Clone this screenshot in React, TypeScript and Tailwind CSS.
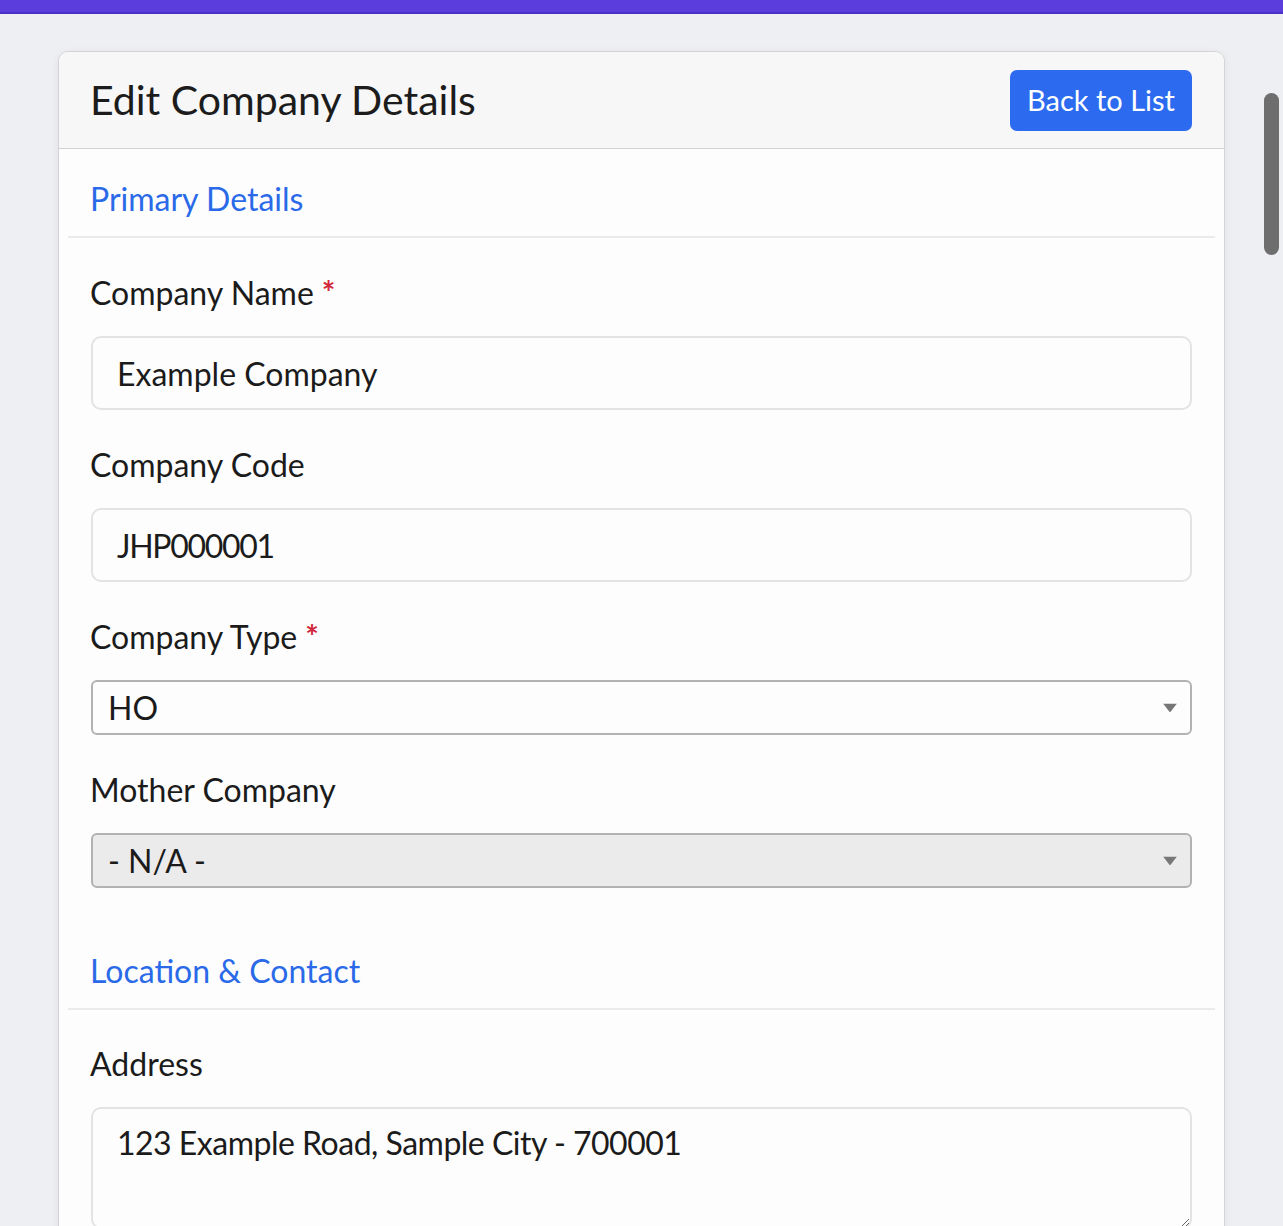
function Caret() {
  return (
    <svg className="pointer-events-none absolute right-[15px] top-1/2 -translate-y-1/2" width="14" height="9" viewBox="0 0 14 9">
      <polygon points="0,0 14,0 7,9" fill="#777777" />
    </svg>
  );
}

function Label({ text, required }: { text: string; required?: boolean }) {
  return (
    <label className="mb-[23px] block text-[32px] leading-[40px] text-[#1b1b1b]">
      {text}
      {required && <span className="ml-[8px] font-bold text-[#d2263b]">*</span>}
    </label>
  );
}

export default function App() {
  return (
    <div className="relative h-[1226px] overflow-hidden bg-[#eeeff3] font-['Lato',sans-serif] text-[#1b1b1b]">
      <div className="h-[14px] border-b-2 border-[#4a30c4] bg-[#5a3ddc]" />
      <div className="px-[58px] pt-[37px]">
        <div className="rounded-[10px] border border-[#d4d4d4] bg-[#fdfdfd] shadow-[0_2px_10px_rgba(0,0,0,0.06)]">
          <div className="flex h-[97px] items-center justify-between rounded-t-[10px] border-b border-[#d2d2d2] bg-[#f7f7f7] pl-[31px] pr-8">
            <h1 className="text-[41px] leading-[48px] text-[#1c1c1c]">Edit Company Details</h1>
            <button className="h-[61px] w-[182px] rounded-[7px] bg-[#2c6bef] text-[29px] leading-[36px] text-white">
              Back to List
            </button>
          </div>
          <div className="px-[9px] pb-10">
            <div className="border-b-2 border-[#ebebeb] pb-[17px] pl-[22px] pr-[23px] pt-[30px] text-[32px] leading-[40px] text-[#2a6ae9]">
              Primary Details
            </div>
            <div className="flex flex-col gap-[35px] pl-[22px] pr-[23px] pt-[35px]">
              <div>
                <Label text="Company Name" required />
                <input
                  readOnly
                  value="Example Company"
                  className="ml-px h-[74px] w-[calc(100%-1px)] rounded-[10px] border-2 border-[#e3e3e3] bg-[#fdfdfd] px-[24px] text-[32px] text-[#1b1b1b] outline-none"
                />
              </div>
              <div>
                <Label text="Company Code" />
                <input
                  readOnly
                  value="JHP000001"
                  className="ml-px h-[74px] w-[calc(100%-1px)] rounded-[10px] border-2 border-[#e3e3e3] bg-[#fdfdfd] px-[24px] text-[32px] tracking-[-1.3px] text-[#1b1b1b] outline-none"
                />
              </div>
              <div>
                <Label text="Company Type" required />
                <div className="relative ml-px">
                  <select
                    defaultValue="HO"
                    className="h-[55px] w-full appearance-none rounded-[6px] border-2 border-[#b2b2b2] bg-[#fdfdfd] pl-[15px] text-[32px] text-[#1b1b1b] outline-none"
                  >
                    <option value="HO">HO</option>
                    <option value="BR">Branch</option>
                  </select>
                  <Caret />
                </div>
              </div>
              <div>
                <Label text="Mother Company" />
                <div className="relative ml-px">
                  <select
                    disabled
                    defaultValue="na"
                    className="h-[55px] w-full appearance-none rounded-[6px] border-2 border-[#b2b2b2] bg-[#ebebeb] pl-[15px] text-[32px] text-[#1b1b1b] opacity-100 outline-none"
                  >
                    <option value="na">- N/A -</option>
                  </select>
                  <Caret />
                </div>
              </div>
            </div>
            <div className="mt-[63px] border-b-2 border-[#ebebeb] pb-[17px] pl-[22px] pr-[23px] text-[32px] leading-[40px] text-[#2a6ae9]">
              Location &amp; Contact
            </div>
            <div className="flex flex-col gap-[35px] pl-[22px] pr-[23px] pt-[34px]">
              <div>
                <Label text="Address" />
                <textarea
                  readOnly
                  defaultValue="123 Example Road, Sample City - 700001"
                  className="ml-px block h-[122px] w-[calc(100%-1px)] rounded-[10px] border-2 border-[#e3e3e3] bg-[#fdfdfd] px-[24px] py-[14px] text-[32px] leading-[40px] tracking-[-0.5px] text-[#1b1b1b] outline-none"
                />
              </div>
            </div>
          </div>
        </div>
      </div>
      <div className="absolute right-[4px] top-[93px] h-[162px] w-[15px] rounded-full bg-[#6e6e6e]" />
    </div>
  );
}
